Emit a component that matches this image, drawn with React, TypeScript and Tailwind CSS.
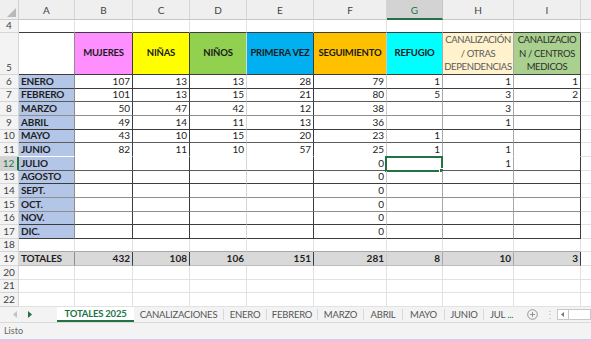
import React from 'react';

const DARK = 'border-b-[#3c3c3c]';
const SOFT = 'border-b-[#5c5c5c]';
const MID = 'border-b-[#8e8e8e]';
const NONE = 'border-b-white';

const widths = ['w-[56px]', 'w-[58px]', 'w-[57px]', 'w-[57px]', 'w-[67px]', 'w-[73px]', 'w-[56px]', 'w-[71px]', 'w-[67px]'];
const rightData = [
  'border-r-[#8e8e8e]',
  'border-r-[#3c3c3c]',
  'border-r-[#3c3c3c]',
  'border-r-[#d6d6d6]',
  'border-r-[#3c3c3c]',
  'border-r-[#cacaca]',
  'border-r-[#a8a8a8]',
  'border-r-[#a8a8a8]',
  'border-r-[#3c3c3c]',
];
const letters = ['A', 'B', 'C', 'D', 'E', 'F', 'G', 'H', 'I'];

type Row = { n: number; h: string; label: string; v: string[]; b: string };

const rows: Row[] = [
  { n: 6, h: 'h-[14px]', label: 'ENERO', v: ['107', '13', '13', '28', '79', '1', '1', '1'], b: DARK },
  { n: 7, h: 'h-[13px]', label: 'FEBRERO', v: ['101', '13', '15', '21', '80', '5', '3', '2'], b: SOFT },
  { n: 8, h: 'h-[14px]', label: 'MARZO', v: ['50', '47', '42', '12', '38', '', '3', ''], b: MID },
  { n: 9, h: 'h-[14px]', label: 'ABRIL', v: ['49', '14', '11', '13', '36', '', '1', ''], b: DARK },
  { n: 10, h: 'h-[13px]', label: 'MAYO', v: ['43', '10', '15', '20', '23', '1', '', ''], b: SOFT },
  { n: 11, h: 'h-[14px]', label: 'JUNIO', v: ['82', '11', '10', '57', '25', '1', '1', ''], b: NONE },
  { n: 12, h: 'h-[14px]', label: 'JULIO', v: ['', '', '', '', '0', '', '1', ''], b: SOFT },
  { n: 13, h: 'h-[13px]', label: 'AGOSTO', v: ['', '', '', '', '0', '', '', ''], b: DARK },
  { n: 14, h: 'h-[14px]', label: 'SEPT.', v: ['', '', '', '', '0', '', '', ''], b: MID },
  { n: 15, h: 'h-[14px]', label: 'OCT.', v: ['', '', '', '', '0', '', '', ''], b: MID },
  { n: 16, h: 'h-[13px]', label: 'NOV.', v: ['', '', '', '', '0', '', '', ''], b: DARK },
  { n: 17, h: 'h-[14px]', label: 'DIC.', v: ['', '', '', '', '0', '', '', ''], b: DARK },
];

const totals = ['432', '108', '106', '151', '281', '8', '10', '3'];

const RowNum = ({ n, selected }: { n: number; selected?: boolean }) =>
  selected ? (
    <div className="w-[19px] shrink-0 flex items-end justify-center leading-[13px] bg-[#d3d3d3] text-[#217346] border-b border-b-[#d0d0d0] border-r-2 border-r-[#217346]">
      {n}
    </div>
  ) : (
    <div className="w-[19px] shrink-0 flex items-end justify-center leading-[13px] bg-[#f3f3f3] text-[#444] border-b border-r border-[#d6d6d6]">
      {n}
    </div>
  );

// plain gridline row (4, 18, 20-22)
const BlankRow = ({ n, h, bottom }: { n: number; h: string; bottom: string }) => (
  <div className={`flex ${h}`}>
    <RowNum n={n} />
    {widths.map((w, i) => (
      <div key={i} className={`${w} shrink-0 border-r border-b border-r-[#e2e2e2] ${bottom}`} />
    ))}
    <div className="flex-1 border-b border-b-[#e2e2e2]" />
  </div>
);

const Selection = () => (
  <div className="absolute -left-[2px] -top-[1px] w-[58px] h-[16px] border-2 border-[#217346]">
    <div className="absolute -right-[3px] -bottom-[3px] w-[5px] h-[5px] bg-[#217346] border border-white" />
  </div>
);

const headers = [
  { bg: 'bg-[#ff8eff]', text: 'MUJERES' },
  { bg: 'bg-[#ffff00]', text: 'NIÑAS' },
  { bg: 'bg-[#92d050]', text: 'NIÑOS' },
  { bg: 'bg-[#00b0f0]', text: 'PRIMERA VEZ' },
  { bg: 'bg-[#ffc000]', text: 'SEGUIMIENTO' },
  { bg: 'bg-[#00ffff]', text: 'REFUGIO' },
];

const tabs = [
  { label: 'CANALIZACIONES', w: 'w-[90px]' },
  { label: 'ENERO', w: 'w-[43px]' },
  { label: 'FEBRERO', w: 'w-[51px]' },
  { label: 'MARZO', w: 'w-[46px]' },
  { label: 'ABRIL', w: 'w-[39px]' },
  { label: 'MAYO', w: 'w-[42px]' },
  { label: 'JUNIO', w: 'w-[39px]' },
];

export default function App() {
  return (
    <div className="w-[591px] h-[341px] overflow-hidden bg-white font-['Lato','Liberation_Sans',sans-serif] text-[10px] text-[#1e1e1e] flex flex-col">
      {/* column letters */}
      <div className="flex h-[20px] bg-[#efefef]">
        <div className="w-[19px] shrink-0 relative border-r border-b border-[#d0d0d0]">
          <svg className="absolute right-[2px] bottom-[2px]" width="9" height="9" viewBox="0 0 9 9">
            <polygon points="9,0 9,9 0,9" fill="#b9b9b9" />
          </svg>
        </div>
        {widths.map((w, i) =>
          letters[i] === 'G' ? (
            <div key={i} className={`${w} shrink-0 flex items-end justify-center pb-[1px] leading-[13px] bg-[#d3d3d3] text-[#217346] border-r border-r-[#c6c6c6] border-b-2 border-b-[#217346]`}>
              {letters[i]}
            </div>
          ) : (
            <div key={i} className={`${w} shrink-0 flex items-end justify-center pb-[2px] leading-[13px] text-[#444] border-r border-b border-r-[#d6d6d6] border-b-[#c6c6c6]`}>
              {letters[i]}
            </div>
          )
        )}
        <div className="flex-1 border-b border-b-[#c6c6c6]" />
      </div>

      <BlankRow n={4} h="h-[13px]" bottom="border-b-[#3c3c3c]" />

      {/* row 5 headers */}
      <div className="flex h-[42px] text-[9.5px] tracking-[-0.2px]">
        <RowNum n={5} />
        <div className={`${widths[0]} shrink-0 border-r border-b ${rightData[0]} ${DARK}`} />
        {headers.map((hd, i) => (
          <div key={i} className={`${widths[i + 1]} ${hd.bg} shrink-0 border-r border-b ${rightData[i + 1]} ${DARK} flex items-center justify-center font-bold text-[#1a1a1a] whitespace-nowrap`}>
            {hd.text}
          </div>
        ))}
        <div className={`${widths[7]} shrink-0 bg-[#fff2cc] border-r border-b ${rightData[7]} ${DARK} flex items-center justify-center text-center leading-[13.5px] tracking-[-0.35px] text-[#5a5a5a]`}>
          CANALIZACIÓN<br />/ OTRAS<br />DEPENDENCIAS
        </div>
        <div className={`${widths[8]} shrink-0 bg-[#a9d08e] border-r border-b ${rightData[8]} ${DARK} flex items-center justify-center text-center leading-[13.5px] tracking-[-0.35px] text-[#2e2e2e]`}>
          CANALIZACIO<br />N / CENTROS<br />MEDICOS
        </div>
        <div className="flex-1 border-b border-b-[#e2e2e2]" />
      </div>

      {rows.map((r) => (
        <div key={r.n} className={`flex ${r.h}`}>
          <RowNum n={r.n} selected={r.n === 12} />
          <div className={`${widths[0]} shrink-0 border-r border-b ${rightData[0]} ${r.b} bg-[#b4c6e7] font-bold tracking-[-0.2px] pl-[2px] flex items-end leading-[13px]`}>
            {r.label}
          </div>
          {r.v.map((val, i) => (
            <div key={i} className={`${widths[i + 1]} shrink-0 border-r border-b ${rightData[i + 1]} ${r.b} relative flex items-end justify-end pr-[2px] leading-[13px]`}>
              {val}
              {r.n === 12 && i === 5 && <Selection />}
            </div>
          ))}
          <div className="flex-1 border-b border-b-[#e2e2e2]" />
        </div>
      ))}

      <BlankRow n={18} h="h-[13px]" bottom="border-b-[#a8a8a8]" />

      {/* totals */}
      <div className="flex h-[14px]">
        <RowNum n={19} />
        <div className={`${widths[0]} shrink-0 border-r border-b ${rightData[0]} border-b-[#bdbdbd] bg-[#d9d9d9] font-bold tracking-[-0.2px] pl-[2px] flex items-end leading-[13px]`}>
          TOTALES
        </div>
        {totals.map((val, i) => (
          <div key={i} className={`${widths[i + 1]} shrink-0 border-r border-b ${rightData[i + 1]} border-b-[#bdbdbd] bg-[#d9d9d9] font-bold flex items-end justify-end pr-[2px] leading-[13px]`}>
            {val}
          </div>
        ))}
        <div className="flex-1 border-b border-b-[#e2e2e2]" />
      </div>

      <BlankRow n={20} h="h-[14px]" bottom="border-b-[#e2e2e2]" />
      <BlankRow n={21} h="h-[13px]" bottom="border-b-[#e2e2e2]" />
      <BlankRow n={22} h="h-[14px]" bottom="border-b-[#e2e2e2]" />

      {/* sheet tabs */}
      <div className="flex h-[15px] bg-[#f3f3f3] text-[9.5px] tracking-[-0.2px] text-[#555] leading-[13px]">
        <div className="w-[57px] shrink-0 flex items-center gap-[11px] pl-[13px]">
          <svg width="4" height="7" viewBox="0 0 4 7"><polygon points="4,0 4,7 0,3.5" fill="#c4c4c4" /></svg>
          <svg width="4" height="7" viewBox="0 0 4 7"><polygon points="0,0 0,7 4,3.5" fill="#217346" /></svg>
        </div>
        <div className="w-[77px] shrink-0 bg-white flex items-center justify-center font-bold text-[#217346] border-b-2 border-[#217346] whitespace-nowrap">
          TOTALES 2025
        </div>
        {tabs.map((t) => (
          <div key={t.label} className={`${t.w} shrink-0 flex items-center justify-center whitespace-nowrap border-r border-r-[#d8d8d8] my-[2px]`}>
            {t.label}
          </div>
        ))}
        <div className="w-[36px] shrink-0 flex items-center pl-[6px] whitespace-nowrap">
          JUL <span className="text-[#217346] ml-[2px]">...</span>
        </div>
        <div className="w-[24px] shrink-0 flex items-center justify-center">
          <svg width="11" height="11" viewBox="0 0 11 11">
            <circle cx="5.5" cy="5.5" r="4.8" fill="none" stroke="#8a8a8a" strokeWidth="0.9" />
            <path d="M5.5 3v5M3 5.5h5" stroke="#8a8a8a" strokeWidth="0.9" />
          </svg>
        </div>
        <div className="w-[12px] shrink-0 flex items-center justify-center text-[#b8b8b8]">⋮</div>
        <div className="flex-1 flex items-center pl-[1px]">
          <div className="h-[11px] w-full bg-white border border-[#c8c8c8] flex items-center pl-[3px]">
            <svg width="3" height="5" viewBox="0 0 3 5"><polygon points="3,0 3,5 0,2.5" fill="#777" /></svg>
            <div className="ml-[4px] h-full border-l border-[#c8c8c8]" />
          </div>
        </div>
      </div>

      {/* status bar */}
      <div className="h-[17px] bg-[#f3f3f3] border-t border-[#dadada] flex items-center pl-[4px] text-[9px] text-[#666]">
        Listo
      </div>
      <div className="h-[2px] bg-[#dcc8ec]" />
    </div>
  );
}
